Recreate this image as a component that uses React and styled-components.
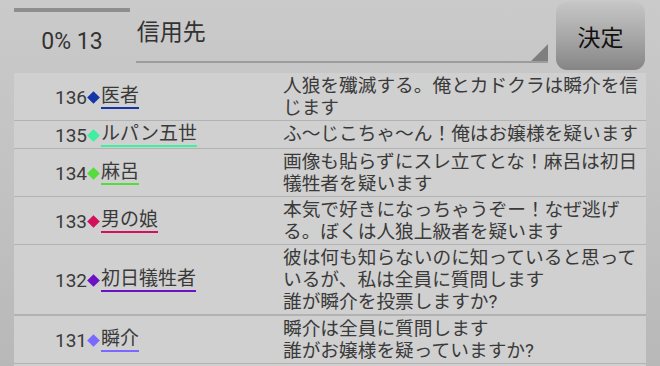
import React from 'react'
import styled, { createGlobalStyle } from 'styled-components'

const GlobalStyle = createGlobalStyle`
  html, body {
    margin: 0;
    height: 100%;
    overflow: hidden;
  }
  body {
    background: linear-gradient(180deg, #cacaca 0%, #c2c2c2 50%, #b8b8b8 100%);
    font-family: Roboto, "Noto Sans CJK JP", sans-serif;
    color: #3a3a3a;
  }
`

const posts = [
  { no: 136, name: '医者', color: '#1434a8', text: '人狼を殲滅する。俺とカドクラは瞬介を信じます' },
  { no: 135, name: 'ルパン五世', color: '#3cf0a0', text: 'ふ〜じこちゃ〜ん！俺はお嬢様を疑います' },
  { no: 134, name: '麻呂', color: '#55dd3c', text: '画像も貼らずにスレ立てとな！麻呂は初日犠牲者を疑います' },
  { no: 133, name: '男の娘', color: '#d4105c', text: '本気で好きになっちゃうぞー！なぜ逃げる。ぼくは人狼上級者を疑います' },
  { no: 132, name: '初日犠牲者', color: '#6a12c4', text: '彼は何も知らないのに知っていると思っているが、私は全員に質問します\n誰が瞬介を投票しますか?', thick: true },
  { no: 131, name: '瞬介', color: '#7a68ff', text: '瞬介は全員に質問します\n誰がお嬢様を疑っていますか?' },
]

const Page = styled.div`
  display: flex;
  flex-direction: column;
`

const Header = styled.header`
  display: flex;
  height: 73px;
  padding: 0 15px 0 14px;
`

const Counter = styled.div`
  width: 116px;
  padding-top: 8px;
  display: flex;
  flex-direction: column;
`

const Bar = styled.div`
  height: 4px;
  background: #8e8e8e;
`

const CounterText = styled.div`
  margin-top: 16px;
  text-align: center;
  font-size: 23px;
  line-height: 28px;
  color: #333;
`

const Select = styled.div`
  position: relative;
  width: 412px;
  margin: 0 0 10px 6px;
  border-bottom: 2px solid #9c9c9c;
  font-size: 23px;
  line-height: 30px;
  padding: 18px 0 0 1px;
  color: #333;

  &::after {
    content: '';
    position: absolute;
    right: 0;
    bottom: 0;
    width: 17px;
    height: 17px;
    background: #7e7e7e;
    clip-path: polygon(100% 0, 100% 100%, 0 100%);
  }
`

const Button = styled.button`
  width: 89px;
  margin: 2px 0 3px 8px;
  border: none;
  border-radius: 11px;
  background: linear-gradient(180deg, #c6c6c6 0%, #a8a8a8 50%, #858585 100%);
  font-family: Roboto, "Noto Sans CJK JP", sans-serif;
  font-size: 23px;
  color: #111;
  padding: 0;
`

const Table = styled.div`
  margin: 0 14px;
  background: #d0d0d0;
`

const Row = styled.div`
  display: grid;
  grid-template-columns: 269px 1fr;
  padding: 2px 0 1px;
  border-bottom: ${p => (p.$thick ? '2px' : '1px')} solid #b2b2b2;
  min-height: ${p => (p.$filler ? '40px' : '0')};
`

const Who = styled.div`
  display: flex;
  align-items: center;
  padding-left: 41px;
  font-size: 19px;
`

const Num = styled.span`
  color: #3a3a3a;
`

const Diamond = styled.span`
  display: inline-block;
  width: 9px;
  height: 9px;
  margin: 0 3px 0 2px;
  background: ${p => p.$color};
  transform: rotate(45deg);
`

const Name = styled.span`
  line-height: 22px;
  border-bottom: 2px solid ${p => p.$color};
  color: #3a3a3a;
`

const Message = styled.div`
  font-size: 18.7px;
  line-height: 22px;
  padding-right: 6px;
  white-space: pre-line;
  color: #3a3a3a;
`

export default function App() {
  return (
    <Page>
      <GlobalStyle />
      <Header>
        <Counter>
          <Bar />
          <CounterText>0% 13</CounterText>
        </Counter>
        <Select>信用先</Select>
        <Button>決定</Button>
      </Header>
      <Table>
        {posts.map(p => (
          <Row key={p.no} $thick={p.thick}>
            <Who>
              <Num>{p.no}</Num>
              <Diamond $color={p.color} />
              <Name $color={p.color}>{p.name}</Name>
            </Who>
            <Message>{p.text}</Message>
          </Row>
        ))}
        <Row $filler />
      </Table>
    </Page>
  )
}
